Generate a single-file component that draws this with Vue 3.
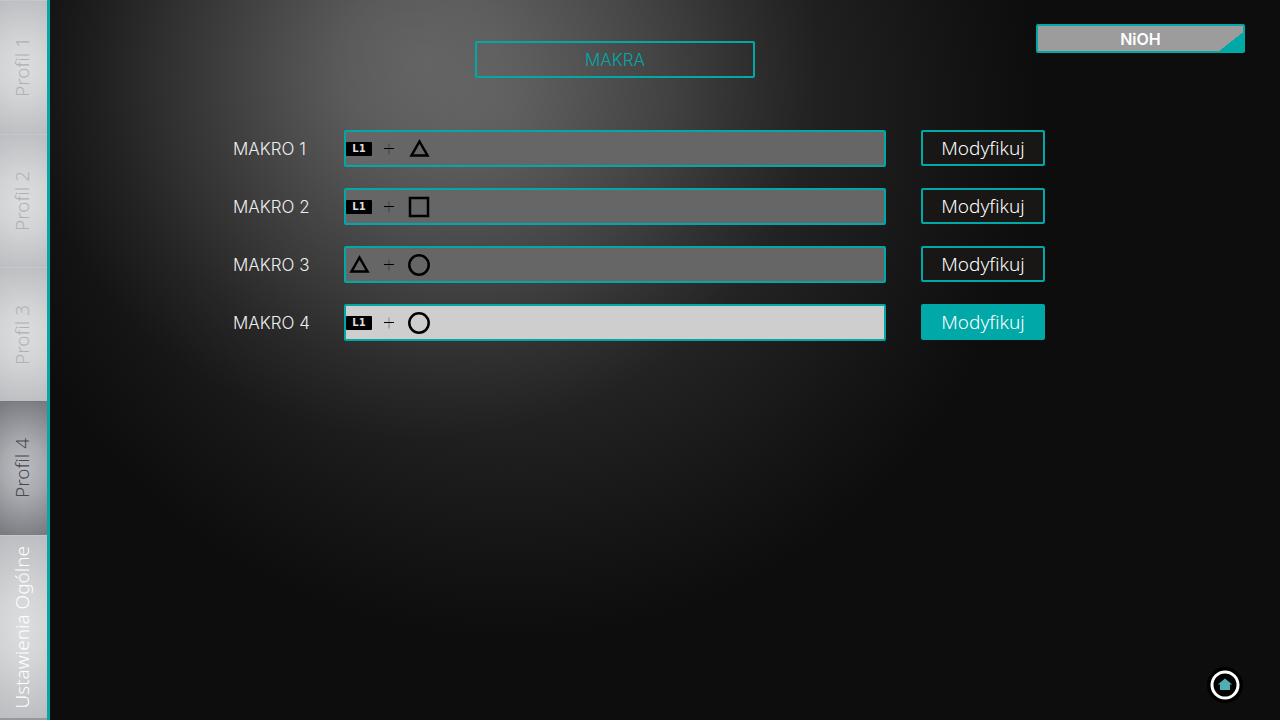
<script setup>
import { ref } from "vue";

const tabs = ref([
  { name: "Profil 1", type: "profile" },
  { name: "Profil 2", type: "profile" },
  { name: "Profil 3", type: "profile" },
  { name: "Profil 4", type: "profile" },
  { name: "Ustawienia Ogólne", type: "general" },
]);
const currentTab = ref(3);

const macros = ref([
  { name: "MAKRO 1", keys: ["l1", "triangle"] },
  { name: "MAKRO 2", keys: ["l1", "square"] },
  { name: "MAKRO 3", keys: ["triangle", "circle"] },
  { name: "MAKRO 4", keys: ["l1", "circle"] },
]);
const currentMacro = ref(3);
</script>

<template>
  <div class="screen">
    <nav class="sidebar">
      <button
        v-for="(t, i) in tabs"
        :key="t.name"
        class="tab"
        :class="[t.type, { active: i === currentTab }]"
        @click="currentTab = i"
      >
        <span class="tab-text">{{ t.name }}</span>
      </button>
    </nav>
    <main class="content">
      <header class="top">
        <h1 class="title">MAKRA</h1>
        <button class="game">NiOH</button>
      </header>
      <section class="macros">
        <div class="macro" v-for="(m, i) in macros" :key="m.name">
          <span class="macro-name">{{ m.name }}</span>
          <div class="field" :class="{ active: i === currentMacro }">
            <template v-for="(k, n) in m.keys" :key="n">
              <svg v-if="n > 0" class="plus" viewBox="0 0 12 12">
                <path d="M6 0.5V11.5" stroke="#000" stroke-opacity="0.35" />
                <path d="M1 5.5H11" stroke="#000" />
              </svg>
              <span class="key">
                <span v-if="k === 'l1'" class="l1">L1</span>
                <svg v-else class="shape" viewBox="0 0 24 24">
                  <path v-if="k === 'triangle'" d="M12.5 4.5L20.5 18.5H4.5Z" />
                  <rect
                    v-else-if="k === 'square'"
                    x="3"
                    y="3"
                    width="18"
                    height="18"
                  />
                  <circle v-else cx="12" cy="12" r="9.7" />
                </svg>
              </span>
            </template>
          </div>
          <button
            class="edit"
            :class="{ active: i === currentMacro }"
            @click="currentMacro = i"
          >
            Modyfikuj
          </button>
        </div>
      </section>
      <footer class="bottom">
        <button class="home" aria-label="Home">
          <svg viewBox="0 0 38 38">
            <circle cx="19" cy="19" r="18" fill="#000" />
            <circle
              cx="19"
              cy="19"
              r="13"
              fill="#000"
              stroke="#fff"
              stroke-width="3"
            />
            <path
              d="M19 12.6L26.2 18.4H24V24H14V18.4H11.8Z"
              fill="#4fb0b3"
            />
          </svg>
        </button>
      </footer>
    </main>
  </div>
</template>

<style>
body {
  margin: 0;
  background: #0d0d0d;
}
</style>

<style scoped>
.screen {
  display: flex;
  min-height: 100vh;
  font-family: "Noto Sans", sans-serif;
  background:
    radial-gradient(
      ellipse 400px 380px at 420px 60px,
      rgba(255, 255, 255, 0.24) 0%,
      rgba(255, 255, 255, 0.21) 20%,
      rgba(255, 255, 255, 0.12) 50%,
      rgba(255, 255, 255, 0.04) 80%,
      transparent 100%
    ),
    radial-gradient(
      ellipse 530px 520px at 510px 120px,
      #3a3a3a 0%,
      #303030 30%,
      #222 56%,
      #151515 82%,
      #0d0d0d 100%
    );
}

button {
  margin: 0;
  padding: 0;
  border: none;
  font-family: inherit;
  cursor: pointer;
}

.sidebar {
  display: flex;
  flex-direction: column;
  flex: none;
  width: 47px;
  border-right: 3px solid #00a9a8;
}

.tab {
  display: flex;
  flex: 134 0 0;
  align-items: center;
  justify-content: center;
  padding-right: 4px;
  border-top: 1px solid #c6c7c9;
  background: radial-gradient(
    ellipse 60px 72px at center,
    #dcdddf 0%,
    #d3d4d6 40%,
    #bcbdc0 100%
  );
  color: #b0b1b3;
  font-size: 19px;
  font-weight: 300;
}

.tab.active {
  border-color: #77787e;
  background: radial-gradient(
    ellipse 52px 70px at center,
    #bcbdc3 0%,
    #a9aab0 40%,
    #7b7c82 100%
  );
  color: #48494d;
}

.tab.general {
  flex-grow: 184;
  border-bottom: 2px solid #97989c;
  background: radial-gradient(
    ellipse 60px 96px at center,
    #dddee0 0%,
    #d3d4d6 40%,
    #bcbdc0 100%
  );
  color: #fff;
}

.tab-text {
  writing-mode: vertical-rl;
  transform: rotate(180deg);
  white-space: nowrap;
}

.content {
  display: flex;
  flex: 1;
  flex-direction: column;
  min-width: 0;
}

.top {
  display: grid;
  grid-template-columns: 294px minmax(280px, 1fr) 394px;
  align-items: start;
  padding-top: 24px;
}

.title {
  grid-column: 2;
  justify-self: center;
  box-sizing: border-box;
  width: 280px;
  height: 37px;
  margin: 17px 0 0;
  border: 2px solid #00a9a8;
  border-radius: 2px;
  color: #00a9a8;
  font-family: Inter, sans-serif;
  font-size: 17px;
  font-weight: 300;
  line-height: 35px;
  text-align: center;
}

.game {
  justify-self: end;
  width: 209px;
  height: 29px;
  margin-right: 35px;
  padding-top: 1px;
  border: 2px solid #00a9a8;
  border-radius: 2px;
  background: linear-gradient(142deg, transparent 50%, #00a9a8 51%) right
    bottom / 24px 19px no-repeat #9c9c9c;
  color: #fff;
  font-family: Inter, sans-serif;
  font-size: 16px;
  font-weight: 600;
  line-height: 24px;
}

.macros {
  display: flex;
  flex-direction: column;
  gap: 21px;
  padding: 52px 235px 0 183px;
}

.macro {
  display: grid;
  grid-template-columns: 111px minmax(100px, 1fr) 124px;
  align-items: center;
}

.macro-name {
  color: #eee;
  font-family: Inter, sans-serif;
  font-size: 17px;
  font-weight: 300;
}

.field {
  display: flex;
  align-items: center;
  box-sizing: border-box;
  height: 37px;
  margin-right: 35px;
  border: 2px solid #00a9a8;
  border-radius: 2px;
  background: #666;
}

.field.active {
  background: #cecece;
}

.key {
  display: flex;
  justify-content: center;
  width: 26px;
}

.l1 {
  width: 26px;
  border-radius: 1px;
  background: #000;
  color: #ddd;
  font-family: "DejaVu Sans", sans-serif;
  font-size: 10px;
  font-weight: bold;
  line-height: 14px;
  text-align: center;
}

.plus {
  width: 12px;
  height: 12px;
  margin: 0 11px;
}

.shape {
  width: 24px;
  height: 24px;
  fill: none;
  stroke: #000;
  stroke-width: 2.5;
}

.edit {
  align-self: start;
  box-sizing: border-box;
  height: 36px;
  border: 2px solid #00a9a8;
  border-radius: 2px;
  background: #181716;
  color: #fff;
  font-size: 19px;
  font-weight: 300;
  line-height: 30px;
}

.edit.active {
  background: #00a9a8;
}

.bottom {
  display: flex;
  justify-content: flex-end;
  margin-top: auto;
  padding: 16px 36px;
}

.home {
  width: 38px;
  height: 38px;
  background: none;
}

.home svg {
  display: block;
  width: 38px;
  height: 38px;
}
</style>
